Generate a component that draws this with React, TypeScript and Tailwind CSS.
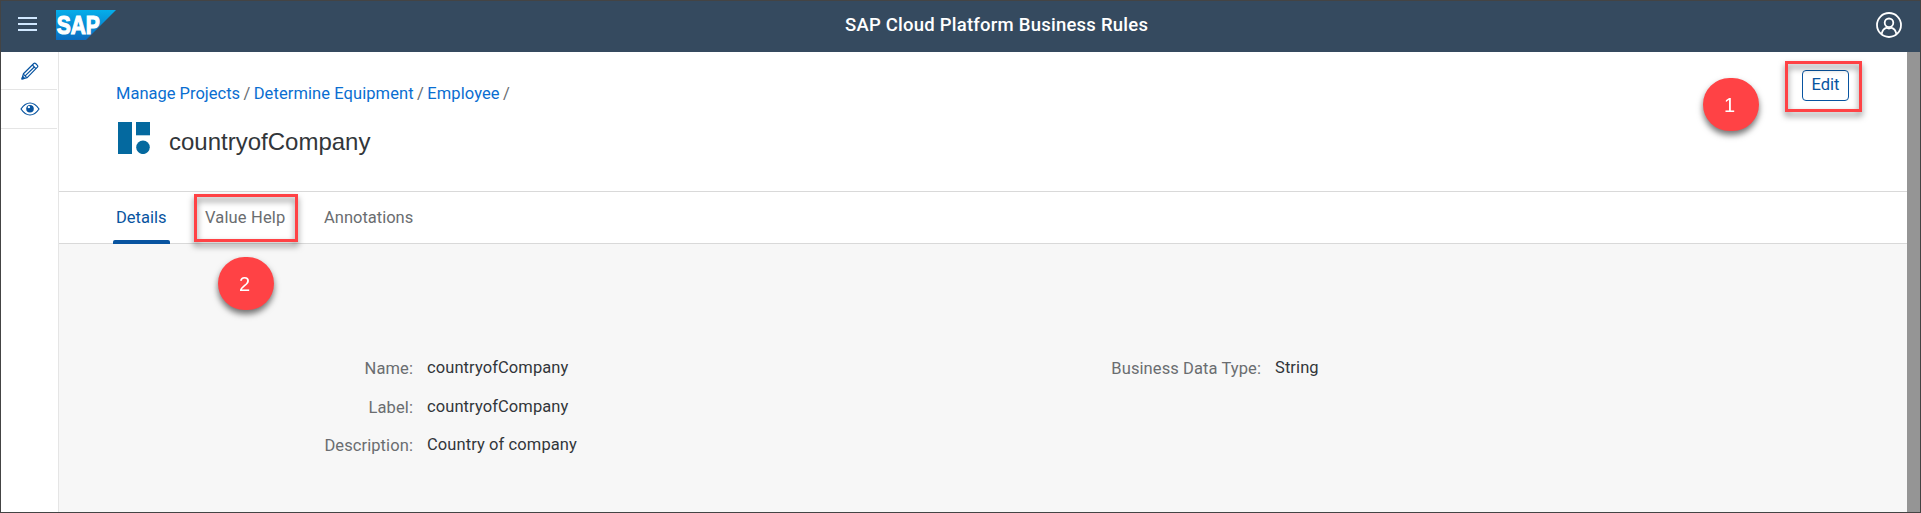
import React from "react";

function SapLogo() {
  return (
    <svg width="60" height="30" viewBox="0 0 60 30" className="shrink-0">
      <defs>
        <linearGradient id="sap" x1="0" y1="0" x2="0" y2="1">
          <stop offset="0" stopColor="#05aeea" />
          <stop offset="1" stopColor="#0a6cc0" />
        </linearGradient>
      </defs>
      <path d="M0 0H60L30 30H0Z" fill="url(#sap)" />
      <text
        x="0.8"
        y="24"
        fontFamily="Liberation Sans, Arial, sans-serif"
        fontWeight="700"
        fontSize="25"
        fill="#fff"
        stroke="#fff"
        strokeWidth="1.2"
        textLength="43"
        lengthAdjust="spacingAndGlyphs"
      >
        SAP
      </text>
    </svg>
  );
}

function PencilIcon() {
  return (
    <svg width="18" height="18" viewBox="0 0 18 18" fill="none" stroke="#0854a0" strokeWidth="1.2" strokeLinejoin="round">
      <path d="M1 17L2.4 11.8L12.8 1.5Q13.7 0.7 14.6 1.5L16.4 3.3Q17.2 4.2 16.4 5.1L6.2 15.6Z" />
      <path d="M11.4 3L14.9 6.6M2.4 12.2L5.8 15.6M4.4 13.6L13 5.2" />
      <path d="M1 17L1.7 14.4L3.6 16.3Z" fill="#0854a0" />
    </svg>
  );
}

function EyeIcon() {
  return (
    <svg width="20" height="14" viewBox="0 0 20 14" fill="none" stroke="#0854a0" strokeWidth="1.2">
      <path d="M1 7Q5 1 10 1T19 7Q15 13 10 13T1 7Z" />
      <circle cx="10" cy="6.8" r="3.8" fill="#0854a0" stroke="none" />
      <circle cx="8.9" cy="5.1" r="1.2" fill="#fff" stroke="none" />
    </svg>
  );
}

function UserIcon() {
  return (
    <svg width="26" height="26" viewBox="0 0 26 26" fill="none" stroke="#fff" strokeWidth="1.8">
      <circle cx="13" cy="13" r="12" />
      <circle cx="13" cy="10.8" r="4.3" />
      <path d="M5.6 22Q6.6 16.8 10.4 15.8Q13 17.2 15.6 15.8Q19.4 16.8 20.4 22" />
    </svg>
  );
}

function ObjectIcon() {
  return (
    <svg width="32" height="32" viewBox="0 0 32 32" fill="#04699f">
      <rect width="14" height="32" />
      <rect x="18" width="14" height="13.3" />
      <circle cx="25" cy="25.3" r="6.8" />
    </svg>
  );
}

function Field({ label, value, labelWidth }: { label: string; value: string; labelWidth: string }) {
  return (
    <div className="flex h-[38.6px] tracking-[0.09px]">
      <div className={`${labelWidth} mt-px text-right text-[#6a6d70]`}>{label}</div>
      <div className="ml-[14px] text-[#32363a]">{value}</div>
    </div>
  );
}

const callout =
  "absolute flex h-[53px] w-[56px] items-center justify-center rounded-full bg-[#ff4245] pr-[3px] font-['Liberation_Sans',Arial,sans-serif] text-[20px] text-white drop-shadow-[0_4px_3px_rgba(0,0,0,0.55)]";
const frame = "absolute border-3 border-[#ff4245] drop-shadow-[0_4px_3px_rgba(0,0,0,0.5)]";

export default function App() {
  return (
    <div className="relative flex h-[513px] w-[1921px] flex-col overflow-hidden border border-[#444] bg-white font-[Roboto,sans-serif] text-[16.5px] leading-[22px]">
      <header className="flex h-[51px] shrink-0 items-center bg-[#354a5f] pr-[18px] pl-[17px]">
        <div className="mt-[-5px] flex w-[19px] flex-col gap-[4px]">
          <span className="h-[2px] bg-[#d1e8ff]" />
          <span className="h-[2px] bg-[#d1e8ff]" />
          <span className="h-[2px] bg-[#d1e8ff]" />
        </div>
        <div className="mt-[-3px] ml-[19px]">
          <SapLogo />
        </div>
        <h1 className="mt-[-3px] ml-[729px] flex-1 text-[18.5px] font-medium tracking-[0.23px] text-white">
          SAP Cloud Platform Business Rules
        </h1>
        <div className="mt-[-3px]">
          <UserIcon />
        </div>
      </header>

      <div className="flex min-h-0 flex-1">
        <nav className="w-[58px] shrink-0 border-r border-[#e5e5e5]">
          <div className="flex h-[38px] w-[56px] items-center justify-center border-b border-[#e5e5e5] pl-[2px]">
            <PencilIcon />
          </div>
          <div className="flex h-[39px] w-[56px] items-center justify-center border-b border-[#e5e5e5] pl-[2px]">
            <EyeIcon />
          </div>
        </nav>

        <main className="flex min-w-0 flex-1 flex-col bg-[#f7f7f7]">
          <section className="flex h-[140px] justify-between border-b border-[#d9d9d9] bg-white pr-[58px] pl-[57px]">
            <div className="pt-[31px]">
              <div className="flex gap-[3.4px] text-[#0a6ed1]">
                <a>Manage Projects</a>
                <span className="text-[#6a6d70]">/</span>
                <a className="tracking-[0.08px]">Determine Equipment</a>
                <span className="text-[#6a6d70]">/</span>
                <a className="tracking-[0.1px]">Employee</a>
                <span className="text-[#6a6d70]">/</span>
              </div>
              <div className="mt-[17px] flex pl-[2px]">
                <ObjectIcon />
                <h2 className="mt-[6px] ml-[19px] font-['Liberation_Sans',Arial,sans-serif] text-[24px] leading-[28px] text-[#32363a]">
                  countryofCompany
                </h2>
              </div>
            </div>
            <button className="mt-[18px] flex h-[31px] w-[47px] items-center justify-center rounded-[4px] border border-[#0854a0] pb-[2px] text-[#0854a0]">
              Edit
            </button>
          </section>

          <div className="flex h-[52px] items-stretch border-b border-[#d9d9d9] bg-white pl-[54px] text-[#6a6d70]">
            <div className="relative w-[57px] pt-[15px] pl-[3px] text-[#0854a0]">
              Details
              <span className="absolute -bottom-px left-0 h-[4px] w-[57px] rounded-t-[2px] bg-[#0854a0]" />
            </div>
            <div className="w-[154px] pt-[15px] pl-[35px] tracking-[0.15px]">Value Help</div>
            <div className="pt-[15px]">Annotations</div>
          </div>

          <div className="flex pt-[113px]">
            <div className="w-[785px]">
              <Field label="Name:" value="countryofCompany" labelWidth="w-[354px]" />
              <Field label="Label:" value="countryofCompany" labelWidth="w-[354px]" />
              <Field label="Description:" value="Country of company" labelWidth="w-[354px]" />
            </div>
            <Field label="Business Data Type:" value="String" labelWidth="w-[417px]" />
          </div>
        </main>

        <div className="w-[13px] shrink-0 bg-[#959595]" />
      </div>

      <div className={`${frame} top-[60px] left-[1784px] h-[51px] w-[77px]`} />
      <div className={`${callout} top-[77px] left-[1702px]`}>1</div>
      <div className={`${frame} top-[193px] left-[193px] h-[48px] w-[104px]`} />
      <div className={`${callout} top-[256px] left-[217px]`}>2</div>
    </div>
  );
}
